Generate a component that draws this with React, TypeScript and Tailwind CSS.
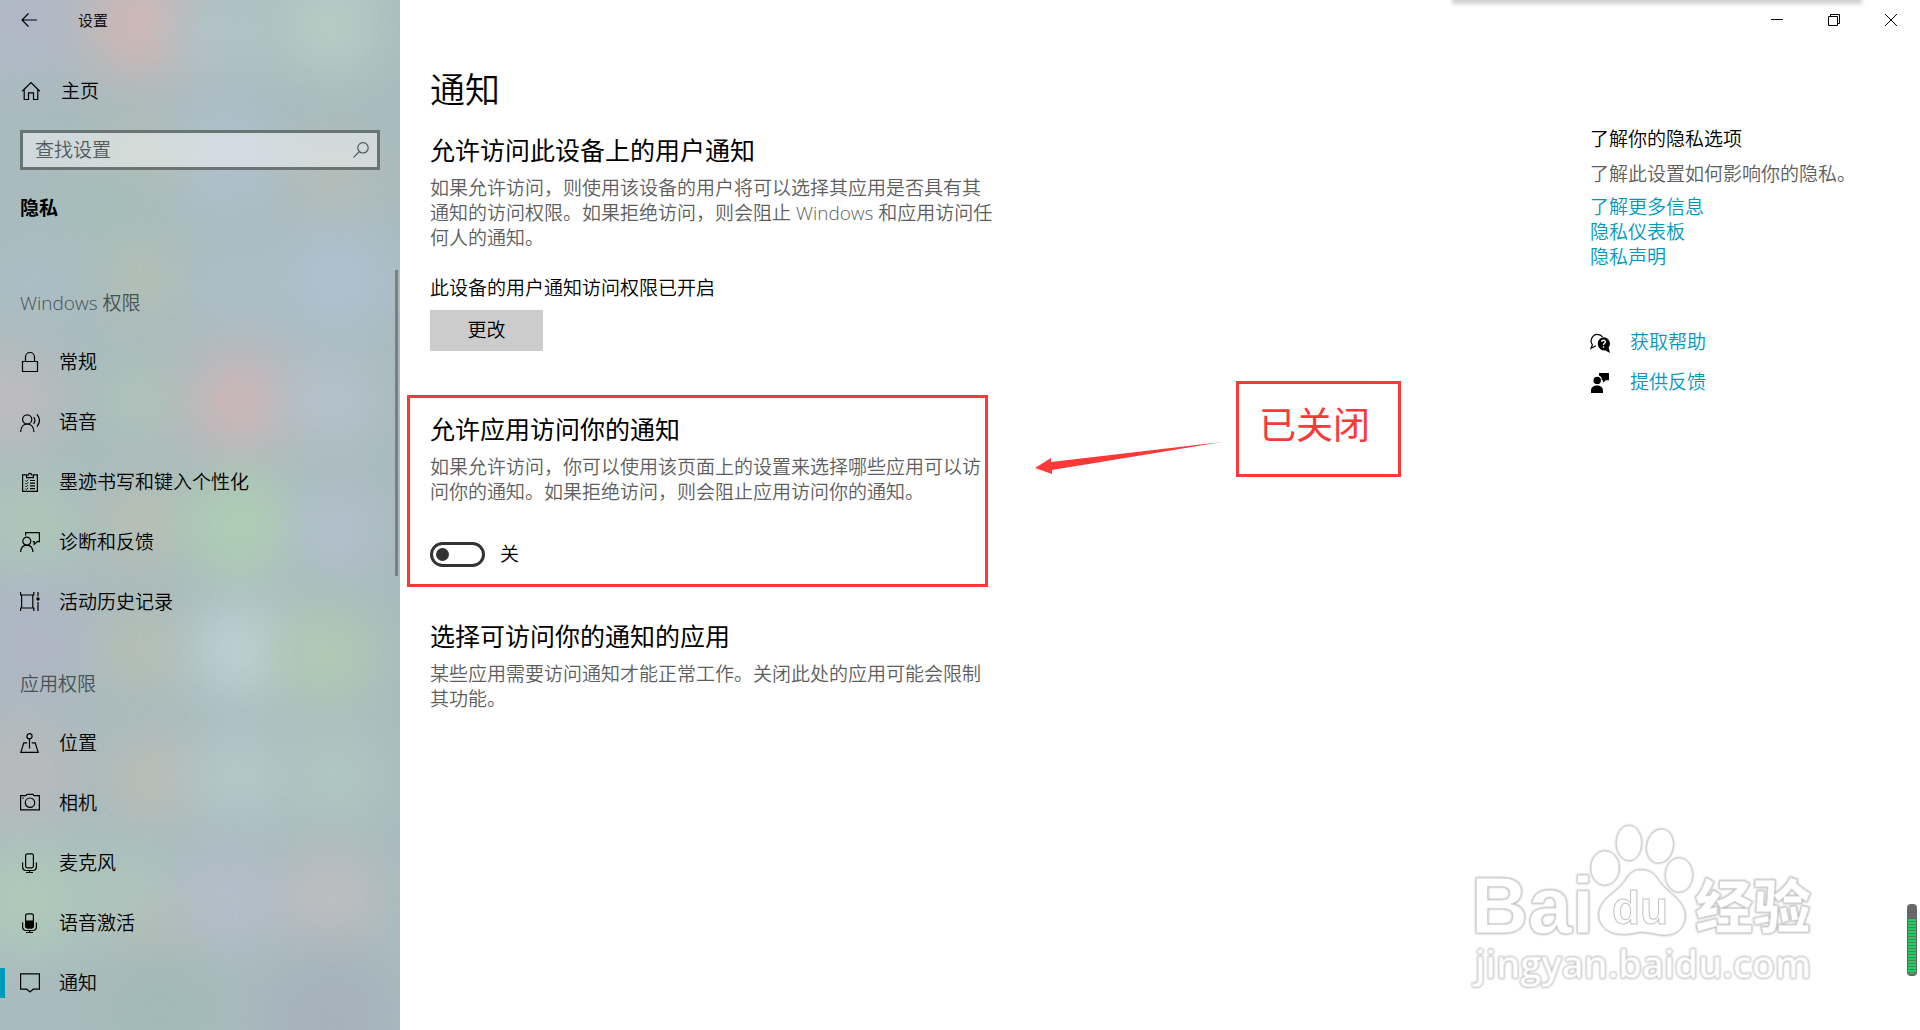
import { useState, type ReactNode } from 'react';

const BLOBS = [
  { x: 20, y: 20, r: 60, color: '#b3b8cb' },
  { x: 142, y: 22, r: 56, color: '#dab6b4' },
  { x: 225, y: 30, r: 50, color: '#b3c6cb' },
  { x: 330, y: 25, r: 52, color: '#bbd1c6' },
  { x: 225, y: 160, r: 54, color: '#b1c2d2' },
  { x: 142, y: 160, r: 38, color: '#b8c0b0' },
  { x: 330, y: 180, r: 36, color: '#bcbfb3' },
  { x: 110, y: 215, r: 50, color: '#a5bfba' },
  { x: 142, y: 280, r: 38, color: '#b9c3b0' },
  { x: 335, y: 280, r: 54, color: '#b1c2d6' },
  { x: 240, y: 290, r: 50, color: '#aec0c9' },
  { x: 40, y: 285, r: 44, color: '#adbfc6' },
  { x: 10, y: 400, r: 46, color: '#c8bcbf' },
  { x: 142, y: 400, r: 40, color: '#b2c6b5' },
  { x: 240, y: 402, r: 50, color: '#d8b5b7' },
  { x: 330, y: 400, r: 44, color: '#b9c6d0' },
  { x: 30, y: 525, r: 52, color: '#b1c9b8' },
  { x: 142, y: 522, r: 40, color: '#c0c2ae' },
  { x: 240, y: 525, r: 54, color: '#b0d4b0' },
  { x: 335, y: 530, r: 40, color: '#b7c3d4' },
  { x: 30, y: 645, r: 62, color: '#b1b6c8' },
  { x: 142, y: 650, r: 40, color: '#bac2ae' },
  { x: 240, y: 650, r: 46, color: '#c5d9dc' },
  { x: 325, y: 655, r: 52, color: '#b3ceb0' },
  { x: 20, y: 775, r: 52, color: '#bfb9bb' },
  { x: 152, y: 778, r: 38, color: '#c6bfb0' },
  { x: 240, y: 775, r: 48, color: '#b8cccd' },
  { x: 335, y: 775, r: 48, color: '#b3cbc3' },
  { x: 30, y: 900, r: 58, color: '#b1cdb9' },
  { x: 125, y: 895, r: 46, color: '#b0cbbc' },
  { x: 225, y: 900, r: 50, color: '#b8bfcf' },
  { x: 330, y: 898, r: 44, color: '#c8bfc2' },
  { x: 155, y: 935, r: 32, color: '#bdbcb1' },
  { x: 160, y: 1010, r: 60, color: '#a1b9b5' },
  { x: 330, y: 1020, r: 70, color: '#a5b0ba' },
];

function Wallpaper() {
  return (
    <svg
      className="absolute inset-0 h-full w-full"
      viewBox="0 0 400 1030"
      preserveAspectRatio="none"
      aria-hidden="true"
    >
      <defs>
        <filter id="haze" x="-100%" y="-100%" width="300%" height="300%" colorInterpolationFilters="sRGB">
          <feGaussianBlur stdDeviation="27" />
        </filter>
      </defs>
      <rect width="400" height="1030" fill="#a9bbbe" />
      <g opacity=".8">
        {BLOBS.map((blob) => (
          <circle
            key={`${blob.x}-${blob.y}`}
            cx={blob.x}
            cy={blob.y}
            r={blob.r}
            fill={blob.color}
            filter="url(#haze)"
          />
        ))}
      </g>
    </svg>
  );
}

function Icon({ children }: { readonly children: ReactNode }) {
  return (
    <svg
      className="h-5 w-5 shrink-0"
      viewBox="0 0 20 20"
      fill="none"
      stroke="currentColor"
      strokeWidth="1.2"
      aria-hidden="true"
    >
      {children}
    </svg>
  );
}

const HomeIcon = (
  <Icon>
    <path d="M1.2 10.2 10 1.6l8.8 8.6M3.2 8.6v9.9h4.3v-6.6h5v6.6h4.3V8.6" />
  </Icon>
);

const LockIcon = (
  <Icon>
    <path d="M2.5 9.5h15v10h-15zM5.5 9.5V5a4.500 4.500 0 0 1 9 0v4.500" />
  </Icon>
);

const SpeechIcon = (
  <Icon>
    <circle cx="7.2" cy="7.4" r="4.6" />
    <path d="M.6 20c.4-5 3-8 6.600-8s6.400 3 6.800 8M13.600 5.200c1.600 2 1.600 4.600 0 6.600M17 2.400c3 3.800 3 8.400 0 12.200" />
  </Icon>
);

const ClipboardIcon = (
  <Icon>
    <path d="M7 2.800H2.600v16.600h14.800V2.800H13M6.600 5.600V3h1.800a1.600 1.600 0 0 1 3.200 0h1.800v2.600z" />
    <path d="M10 8.500h5M10 11.200h5M10 13.900h5M10 16.600h5" />
    <path d="m5.300 8.500 1 1 1.800-1.800M5.300 11.200l1 1 1.800-1.800M5.300 13.900l1 1 1.800-1.800M5.300 16.600l1 1 1.800-1.800" strokeWidth="1" />
  </Icon>
);

const DiagnosticsIcon = (
  <Icon>
    <circle cx="6.800" cy="9.200" r="4" />
    <path d="M.6 20c.4-4.200 2.800-6.800 6.200-6.800s5.800 2.600 6.200 6.800M5.600 3.600V.6h13.800v9h-2.200l-3 2.800V9.600h-1.400" />
  </Icon>
);

const HistoryIcon = (
  <Icon>
    <path d="M.6 0v3h13.200V0M.6 19v-3h13.200v3M1.600 3v13M12.800 3v13M18 0v4.500M18 10v9" />
    <circle cx="18" cy="7" r="1.700" fill="currentColor" stroke="none" />
  </Icon>
);

const LocationIcon = (
  <Icon>
    <circle cx="9.500" cy="3.200" r="2.600" />
    <path d="M9.500 5.800v9.600M7.200 9.800H3.800L.8 19.400h17.400l-3-9.600h-3.400" />
  </Icon>
);

const CameraIcon = (
  <Icon>
    <path d="M.6 2.600h5.200L7 1.400h6l1.200 1.200h5.200v14.200H.6z" />
    <circle cx="10" cy="9.700" r="4.700" />
    <path d="M2.400 5h1.600" />
  </Icon>
);

const MicIcon = (
  <Icon>
    <rect x="5.600" y=".8" width="7.800" height="14" rx="1.800" />
    <path d="M2.600 9.500v4.300c0 2.300 1.500 3.700 3.700 3.700h6.400c2.200 0 3.700-1.400 3.700-3.700V9.500M9.500 17.500v2M6 19.500h7" />
  </Icon>
);

const VoiceActivationIcon = (
  <Icon>
    <rect x="5.600" y=".8" width="7.800" height="14" rx="1.800" />
    <path d="M5.600 8h7.800v5.500l-1.300 1.300H6.900l-1.300-1.300z" fill="currentColor" />
    <path d="M2.600 9.500v4.300c0 2.300 1.500 3.700 3.700 3.700h6.400c2.200 0 3.700-1.400 3.700-3.700V9.500M9.500 17.500v2M6 19.500h7" />
  </Icon>
);

const NotificationIcon = (
  <Icon>
    <path d="M.6.8h18.800v15.400h-6.200L10 19l-3.200-2.800H.6z" />
  </Icon>
);

const NAV_GROUPS = [
  {
    title: 'Windows 权限',
    items: [
      { label: '常规', icon: LockIcon },
      { label: '语音', icon: SpeechIcon },
      { label: '墨迹书写和键入个性化', icon: ClipboardIcon },
      { label: '诊断和反馈', icon: DiagnosticsIcon },
      { label: '活动历史记录', icon: HistoryIcon },
    ],
  },
  {
    title: '应用权限',
    items: [
      { label: '位置', icon: LocationIcon },
      { label: '相机', icon: CameraIcon },
      { label: '麦克风', icon: MicIcon },
      { label: '语音激活', icon: VoiceActivationIcon },
      { label: '通知', icon: NotificationIcon },
    ],
  },
];

function Sidebar() {
  const [active, setActive] = useState('通知');

  return (
    <aside className="relative w-[400px] shrink-0 overflow-hidden">
      <Wallpaper />
      <div className="relative">
        <header className="flex h-10 items-center gap-10 pl-5">
          <button type="button" aria-label="返回" className="flex w-[18px] justify-center">
            <svg className="h-4 w-4 shrink-0" viewBox="0 0 16 16" fill="none" stroke="currentColor" strokeWidth="1.2">
              <path d="M16 8H1M7.500 1.500 1 8l6.500 6.500" />
            </svg>
          </button>
          <span className="text-[15px]">设置</span>
        </header>

        <a href="#home" className="mt-[21px] flex h-[60px] items-center gap-5 pl-[21px]">
          {HomeIcon}
          <span>主页</span>
        </a>

        <label className="mx-5 mt-[9px] flex h-10 items-center border-[3px] border-[#6a7573] bg-white/45 pr-2 pl-3">
          <input
            type="text"
            aria-label="查找设置"
            placeholder="查找设置"
            className="min-w-0 flex-1 bg-transparent outline-none placeholder:text-[#515a5b]"
          />
          <svg className="h-4 w-4" viewBox="0 0 16 16" fill="none" stroke="#4d5657" strokeWidth="1.200">
            <circle cx="10" cy="5.800" r="5.200" />
            <path d="M6.400 9.600.6 15.400" />
          </svg>
        </label>

        <h2 className="flex h-[76px] items-center pl-5 font-bold">隐私</h2>

        <nav className="mt-[26px]">
          {NAV_GROUPS.map((group) => (
            <div key={group.title} className="mb-[21px] last:mb-0">
              <h3 className="flex h-[60px] items-center pt-[3px] pl-5 text-[#475254]">{group.title}</h3>
              {group.items.map((item) => (
                <button
                  key={item.label}
                  type="button"
                  onClick={() => setActive(item.label)}
                  className="relative flex h-[60px] w-full items-center gap-[19px] pl-5 text-left"
                >
                  {active === item.label && (
                    <span className="absolute left-0 h-[30px] w-[5px] bg-[#0099bc]" />
                  )}
                  {item.icon}
                  <span>{item.label}</span>
                </button>
              ))}
            </div>
          ))}
        </nav>
      </div>
      <div className="absolute top-[270px] right-[2px] h-[306px] w-[3px] bg-[#7b7f82]" />
    </aside>
  );
}

function WindowControls() {
  return (
    <div className="flex h-10 justify-end pr-px">
      <button type="button" aria-label="最小化" className="flex w-[57px] items-center justify-center">
        <svg className="h-3 w-3" viewBox="0 0 12 12" stroke="currentColor">
          <path d="M0 5.500h12" />
        </svg>
      </button>
      <button type="button" aria-label="还原" className="flex w-[57px] items-center justify-center">
        <svg className="h-3 w-3" viewBox="0 0 12 12" fill="none" stroke="currentColor">
          <path d="M.5 2.500h9v9h-9zM2.500 2.500v-2h9v9h-2" />
        </svg>
      </button>
      <button type="button" aria-label="关闭" className="flex w-[57px] items-center justify-center">
        <svg className="h-3 w-3" viewBox="0 0 12 12" stroke="currentColor">
          <path d="m0 0 12 12M12 0 0 12" />
        </svg>
      </button>
    </div>
  );
}

function Callout() {
  return (
    <div className="absolute top-[-17px] left-full flex w-max text-[#fd3838]">
      <svg className="mt-[58px] ml-[50px] h-9 w-[190px]" viewBox="0 0 190 36" fill="currentColor" aria-hidden="true">
        <path d="M0 29 16 19v4L187 3 17 31v4z" />
      </svg>
      <p className="ml-[11px] h-24 w-[165px] border-[3px] border-[#fd3838] pt-4 pl-5 text-[37px] leading-[50px] font-normal">
        已关闭
      </p>
    </div>
  );
}

function Content() {
  const [allowed, setAllowed] = useState(false);

  return (
    <main className="w-[581px] shrink-0">
      <section className="pl-[23px]">
        <h1 className="text-[35px] leading-[50px]">通知</h1>
        <h2 className="mt-[10px] text-[25px] leading-[50px] font-normal">允许访问此设备上的用户通知</h2>
        <p className="mt-px w-[568px] text-[#5e5e5e]">
          如果允许访问，则使用该设备的用户将可以选择其应用是否具有其通知的访问权限。如果拒绝访问，则会阻止 Windows 和应用访问任何人的通知。
        </p>
        <p className="mt-[25px]">此设备的用户通知访问权限已开启</p>
        <button type="button" className="mt-[9px] h-[41px] w-[113px] bg-[#cccccc]">
          更改
        </button>
      </section>

      <section className="relative mt-11 h-48 border-[3px] border-[#fd3838] pt-[6px] pl-5">
        <h2 className="text-[25px] leading-[50px] font-normal">允许应用访问你的通知</h2>
        <p className="mt-px text-[#5e5e5e]">
          如果允许访问，你可以使用该页面上的设置来选择哪些应用可以访问你的通知。如果拒绝访问，则会阻止应用访问你的通知。
        </p>
        <label className="mt-[37px] flex w-max items-center gap-[15px]">
          <input
            type="checkbox"
            role="switch"
            checked={allowed}
            onChange={(e) => setAllowed(e.target.checked)}
            className="flex h-[25px] w-[55px] appearance-none items-center rounded-full border-[3px] border-[#333333] px-[3px] before:h-[13px] before:w-[13px] before:rounded-full before:bg-[#333333] checked:justify-end"
          />
          <span>{allowed ? '开' : '关'}</span>
        </label>
        <Callout />
      </section>

      <section className="mt-6 pl-[23px]">
        <h2 className="text-[25px] leading-[50px] font-normal">选择可访问你的通知的应用</h2>
        <p className="mt-px text-[#5e5e5e]">
          某些应用需要访问通知才能正常工作。关闭此处的应用可能会限制其功能。
        </p>
      </section>
    </main>
  );
}

function RelatedLinks() {
  return (
    <aside className="mt-[62px] w-[330px] shrink-0">
      <h2>了解你的隐私选项</h2>
      <p className="mt-[10px] text-[#5e5e5e]">了解此设置如何影响你的隐私。</p>
      <ul className="mt-2 text-[#0099bc]">
        <li><a href="#more">了解更多信息</a></li>
        <li><a href="#dashboard">隐私仪表板</a></li>
        <li><a href="#statement">隐私声明</a></li>
      </ul>
      <ul className="mt-[60px] space-y-[15px] text-[#0099bc]">
        <li className="flex items-center gap-5">
          <svg className="h-5 w-5" viewBox="0 0 20 20" aria-hidden="true">
            <path d="M6 12.800 1 15.400l1.400-3.600A6.400 6.400 0 1 1 12.600 4" fill="none" stroke="#000" strokeWidth="1.200" />
            <path d="M13.400 4.200a6.500 6.500 0 0 1 5.200 10.400L20 20l-4.600-2.600A6.600 6.600 0 1 1 13.400 4.200z" fill="#000" />
            <path d="M11.600 8.800c.3-2.200 3.900-2 3.800.1-.1 1.400-1.900 1.500-1.900 3.200M13.500 13.300v1.400" fill="none" stroke="#fff" strokeWidth="1.300" />
          </svg>
          <a href="#help">获取帮助</a>
        </li>
        <li className="flex items-center gap-5">
          <svg className="h-5 w-5" viewBox="0 0 20 20" aria-hidden="true">
            <circle cx="7.200" cy="7.400" r="3.700" />
            <path d="M1 20v-2.500C1 14.500 3.500 12.500 7 12.500s6 2 6 5V20zM9 0h10v7.200h-3.200L13 9.800V7.200h-1.200C12 4.600 11 3 9 2.400z" />
          </svg>
          <a href="#feedback">提供反馈</a>
        </li>
      </ul>
    </aside>
  );
}

function Watermark() {
  return (
    <svg
      className="pointer-events-none absolute right-[60px] bottom-0 h-[230px] w-[420px] drop-shadow-[0_0_1px_#999999]"
      viewBox="0 0 420 230"
      fill="#fff"
      stroke="#d6d6d6"
      strokeWidth="1"
      aria-hidden="true"
    >
      <ellipse cx="165" cy="68" rx="14" ry="17" />
      <ellipse cx="189" cy="43" rx="12.500" ry="17.500" />
      <ellipse cx="220" cy="46" rx="13" ry="17" transform="rotate(12 220 46)" />
      <ellipse cx="239" cy="75" rx="13.500" ry="17" />
      <path d="M201 70c8 0 13 3 18 11 7 11 27 20 26 36-1 13-11 19-23 18-8-1-14-3-20-3s-12 3-21 2c-12 0-22-8-22-19 0-16 18-22 26-34 5-8 9-11 16-11z" />
      <text x="31" y="133" fontFamily="Liberation Sans, sans-serif" fontWeight="bold" fontSize="79">Bai</text>
      <text x="172" y="124" fontFamily="Liberation Sans, sans-serif" fontWeight="bold" fontSize="46" stroke="#c4c4c4">du</text>
      <text x="255" y="128" fontFamily="Noto Sans CJK SC, sans-serif" fontWeight="900" fontSize="58">经验</text>
      <text x="35" y="178" fontFamily="Open Sans, sans-serif" fontWeight="600" fontSize="38" stroke="#e6e6e6">jingyan.baidu.com</text>
    </svg>
  );
}

function BatteryGauge() {
  return (
    <div className="absolute right-[3px] bottom-[54px] flex h-[72px] w-[10px] flex-col rounded-[4px] bg-[#666666] px-px pt-[15px] pb-[2px]">
      <div className="flex-1 rounded-b-[3px] bg-[repeating-linear-gradient(to_bottom,#1fce62_0px,#1fce62_2px,#4a8560_2px,#4a8560_3px)]" />
    </div>
  );
}

export default function App() {
  return (
    <div className="relative flex min-h-screen overflow-hidden bg-white font-['Open_Sans','Noto_Sans_CJK_SC',sans-serif] text-[19px] leading-[25px] font-[350] text-black">
      <Sidebar />
      <div className="min-w-0 flex-1">
        <WindowControls />
        <div className="mt-[25px] flex justify-between pl-[7px]">
          <Content />
          <RelatedLinks />
        </div>
      </div>
      <div className="absolute -top-1 right-[60px] h-[6px] w-[406px] bg-[#d2d2d2] shadow-[0_0_4px_2px_#d2d2d2]" />
      <Watermark />
      <BatteryGauge />
    </div>
  );
}
